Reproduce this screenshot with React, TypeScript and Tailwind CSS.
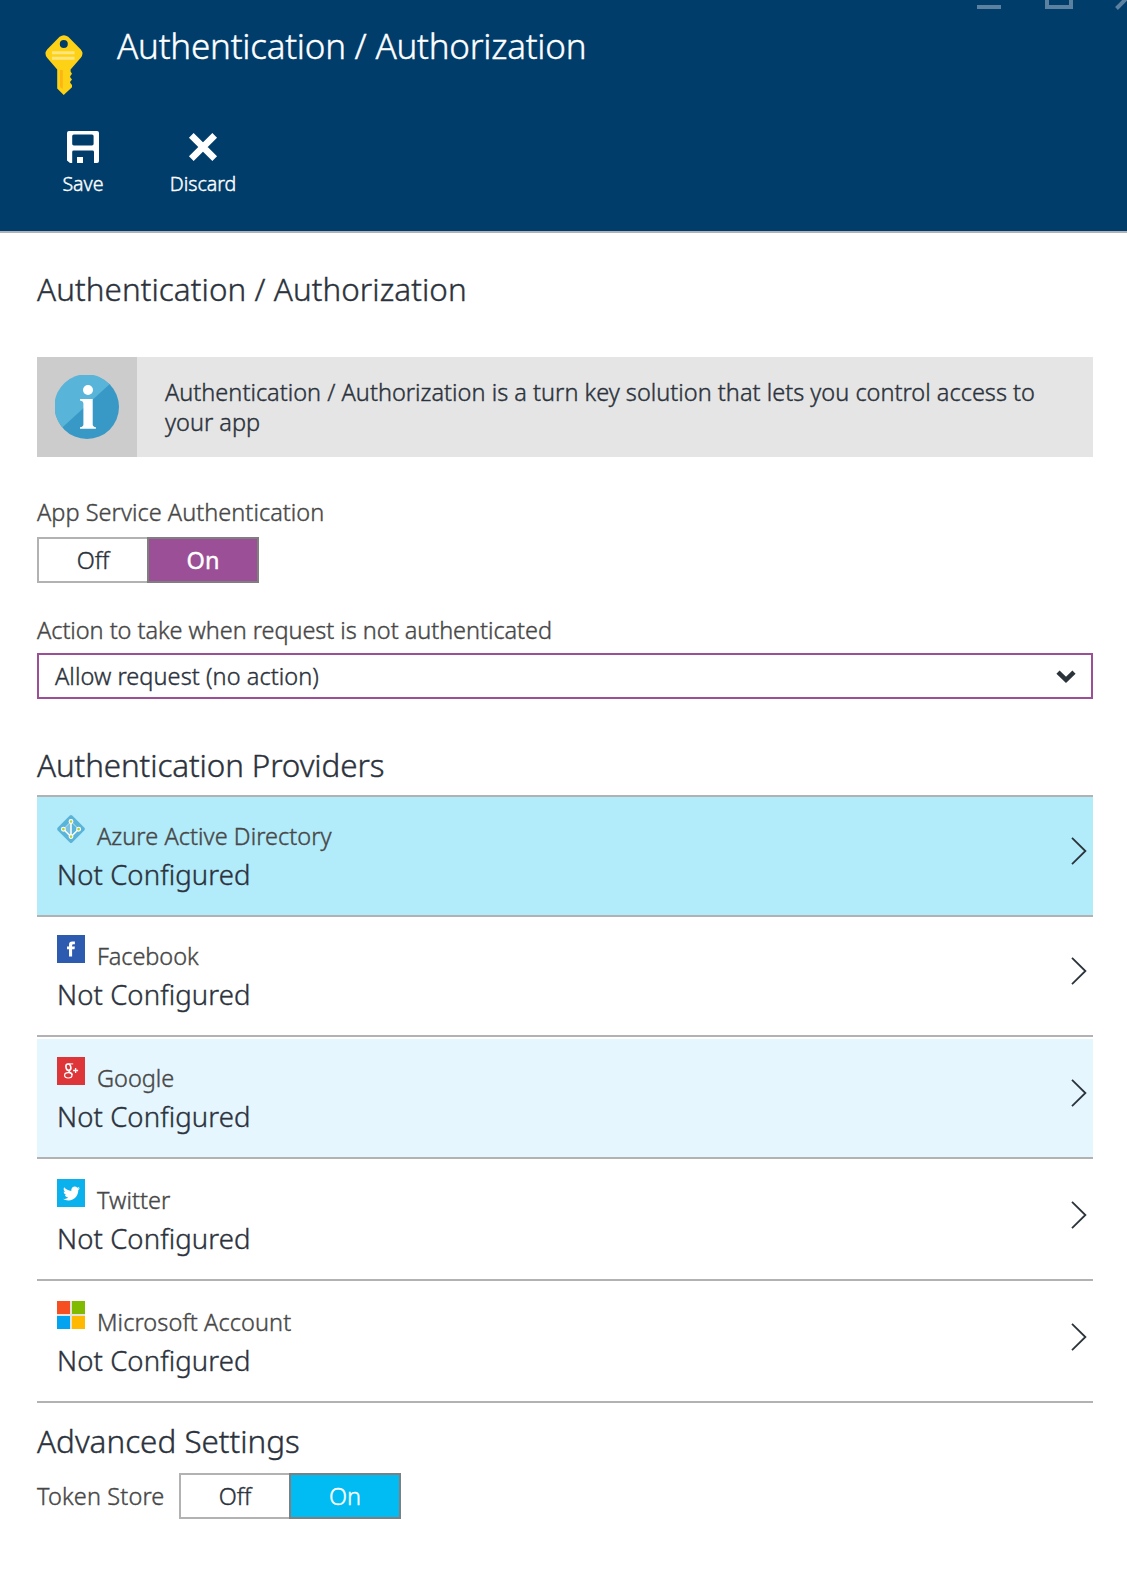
import React, { useState } from "react";
import { FaTwitter } from "react-icons/fa";

function KeyIcon() {
  return (
    <svg className="block h-[60px] w-[38px]" viewBox="0 0 38 60">
      <path
        fillRule="evenodd"
        fill="#FCD116"
        d="M14.6 1.8Q18.9 -1.4 23.2 1.8L35.8 14.4Q39.2 18.6 35.8 22.8L25.6 34.4V36.6L27 38.8L25.2 41.2V42.2L27 44.4L25.2 46.8V47.8L27 50V52.2L18.7 60L12.2 53.4V34.4L2.1 22.8Q-1.2 18.6 2.1 14.4ZM18.8 4.9A4 4 0 1 0 18.8 12.9A4 4 0 1 0 18.8 4.9Z"
      />
      <path fill="#FFE57C" d="M7 16.3H29.6V19.3H7ZM7 21.8H29.6V24.8H7Z" />
      <path fill="#FCB514" d="M15 35H17.8V54L15 52Z" />
    </svg>
  );
}

function SaveIcon() {
  return (
    <svg className="block size-8" viewBox="0 0 32 32">
      <path
        fill="#fff"
        fillRule="evenodd"
        d="M2 0H30Q32 0 32 2V30Q32 32 30 32H27V21Q27 19.6 25.4 19.6H6.6Q5.2 19.6 5.2 21V32H3L0 29.6V2Q0 0 2 0ZM6.8 3.4Q5.2 3.4 5.2 5V13Q5.2 14.4 6.8 14.4H25Q26.6 14.4 26.6 13V5Q26.6 3.4 25 3.4Z"
      />
      <path fill="#fff" d="M10 26H16V32H10Z" />
    </svg>
  );
}

function DiscardIcon() {
  return (
    <svg className="block size-8" viewBox="0 0 32 32">
      <path d="M4.3 4.3L27.7 27.7M27.7 4.3L4.3 27.7" stroke="#fff" strokeWidth="6.6" />
    </svg>
  );
}

function InfoIcon() {
  return (
    <svg className="block size-16" viewBox="0 0 64 64">
      <circle cx="32" cy="32" r="32" fill="#3999C6" />
      <path d="M7.3 52.4A32 32 0 0 1 54.5 9.2Z" fill="#59B4D9" />
      <circle cx="33" cy="15" r="5" fill="#fff" />
      <path
        fill="#fff"
        d="M25 24H37.7V49.5Q37.7 51.8 40.9 52.2V53.8H25V52.2Q28.4 51.8 28.4 49.5V28.6Q28.4 26.2 25 25.6Z"
      />
    </svg>
  );
}

function AzureIcon() {
  return (
    <svg className="block size-7" viewBox="0 0 28 28">
      <path d="M12.8 .6Q14 -.4 15.2 .6L27.4 12.8Q28.4 14 27.4 15.2L15.2 27.4Q14 28.4 12.8 27.4L.6 15.2Q-.4 14 .6 12.8Z" fill="#59B4D9" />
      <path d="M14 6.5L6.4 14.2L14 21.8Z" fill="#7CC3E0" />
      <path d="M14 6.5L6.4 14.2L14 21.8L21.6 14.2Z" fill="none" stroke="#BFE4F2" strokeWidth="1" />
      <path d="M14 6.5V21.8M6.4 14.2L14 21.8L21.6 14.2" fill="none" stroke="#fff" strokeWidth="1.5" />
      <g fill="#B8D432" stroke="#fff" strokeWidth="1.1">
        <circle cx="14" cy="6.5" r="1.9" />
        <circle cx="6.4" cy="14.2" r="1.9" />
        <circle cx="21.6" cy="14.2" r="1.9" />
        <circle cx="14" cy="21.6" r="1.9" />
      </g>
    </svg>
  );
}

function FacebookIcon() {
  return (
    <svg className="block size-7 bg-[#2D5BB0]" viewBox="0 0 28 28">
      <path
        fill="#fff"
        d="M12 21.6V14.2H10V11.5H12V9.9Q12 6.6 15.2 6.6H17.9V9.3H16.2Q15.1 9.3 15.1 10.4V11.5H17.9L17.5 14.2H15.1V21.6Z"
      />
    </svg>
  );
}

function GoogleIcon() {
  return (
    <svg className="block size-7 bg-[#DD3538]" viewBox="0 0 28 28">
      <g fill="none" stroke="#fff">
        <ellipse cx="11.4" cy="10.2" rx="2.4" ry="3.2" strokeWidth="1.6" transform="rotate(-14 11.4 10.2)" />
        <path d="M11.4 6.9H16.2" strokeWidth="1" />
        <path d="M13 13Q11 14.2 13 15.4Q15.2 16.6 15.1 18" strokeWidth="1.5" />
        <ellipse cx="11.3" cy="18.3" rx="3.7" ry="2.7" strokeWidth="1.2" />
        <path d="M18.6 11V16M16.1 13.5H21.1" strokeWidth="1.3" />
      </g>
    </svg>
  );
}

function TwitterIcon() {
  return (
    <div className="size-7 bg-[#0AB1EC] pt-1.5 pl-1.5">
      <FaTwitter className="block size-[17px] text-white" />
    </div>
  );
}

function MicrosoftIcon() {
  return (
    <div className="grid size-7 grid-cols-2 gap-[1.6px] bg-[#E4E4DC]">
      <div className="bg-[#F65022]" />
      <div className="bg-[#80BB01]" />
      <div className="bg-[#02A4F0]" />
      <div className="bg-[#FFB902]" />
    </div>
  );
}

const providers = [
  { name: "Azure Active Directory", Icon: AzureIcon, row: "bg-[#B2EBFA]", label: "tracking-[0.06px]" },
  { name: "Facebook", Icon: FacebookIcon, row: "bg-white", label: "tracking-[-0.07px]" },
  { name: "Google", Icon: GoogleIcon, row: "mt-0.5 bg-[#E5F6FE]", label: "tracking-normal" },
  { name: "Twitter", Icon: TwitterIcon, row: "mt-0.5 bg-white", label: "tracking-[0.05px]" },
  { name: "Microsoft Account", Icon: MicrosoftIcon, row: "mt-0.5 bg-white", label: "tracking-[0.1px]" },
];

function Toggle({ onClass }: { onClass: string }) {
  const [on, setOn] = useState(true);
  const base = "h-[46px] w-28 border-2 pb-px text-center text-[23.5px] leading-[42px]";
  const off = "border-[#B2B2B2] bg-white text-[#2B323C]";
  const active = "relative border-[#7F7F7F] text-white " + onClass;
  return (
    <div className="flex w-[222px]">
      <button className={base + " " + (on ? off : active)} onClick={() => setOn(false)}>Off</button>
      <button className={base + " -ml-0.5 " + (on ? active : off)} onClick={() => setOn(true)}>On</button>
    </div>
  );
}

export default function App() {
  return (
    <div className="h-[1585px] w-[1127px] overflow-hidden bg-white font-['Noto_Sans','Open_Sans',sans-serif] font-light text-[#2B323C] [-webkit-text-stroke:0.4px]">
      <header className="relative h-[233px] border-b-2 border-[#B0B3B6] bg-[#003D6B] text-white">
        <svg className="absolute top-0 right-0 h-3 w-[150px]" viewBox="0 0 150 12" fill="none" stroke="#5C81A0" strokeWidth="4">
          <path d="M0 7H24M70 -4V7H94V-4M139.5 8.5L152 -4" />
        </svg>
        <div className="flex">
          <div className="pt-[35px] pl-[45px]">
            <KeyIcon />
          </div>
          <h1 className="ml-[34px] pt-[22px] text-[35px] leading-[48px] tracking-[-0.24px]">Authentication / Authorization</h1>
        </div>
        <div className="mt-9 flex pl-[43px]">
          <button className="flex w-20 flex-col items-center text-[19.6px] leading-[30px]">
            <SaveIcon />
            <span className="mt-1.5">Save</span>
          </button>
          <button className="ml-10 flex w-20 flex-col items-center text-[19.6px] leading-[30px]">
            <DiscardIcon />
            <span className="mt-1.5">Discard</span>
          </button>
        </div>
      </header>

      <main className="pt-9 pr-[34px] pl-[37px]">
        <h2 className="text-[31.4px] leading-10 tracking-[0.08px]">Authentication / Authorization</h2>

        <div className="mt-12 flex h-[100px] bg-[#E5E5E5]">
          <div className="flex w-[100px] items-center justify-center bg-[#CCCCCC]">
            <InfoIcon />
          </div>
          <p className="pt-5 pl-7 text-[23.5px] leading-[30px] tracking-[0.02px]">
            Authentication / Authorization is a turn key solution that lets you control access to
            <br />
            your app
          </p>
        </div>

        <div className="mt-10 text-[23.5px] leading-[30px] tracking-[0.04px] text-[#474747]">App Service Authentication</div>
        <div className="mt-2.5">
          <Toggle onClass="bg-[#9B4F96] font-normal" />
        </div>

        <div className="mt-8 text-[23.5px] leading-[30px] tracking-[-0.04px] text-[#474747]">
          Action to take when request is not authenticated
        </div>
        <div className="mt-2 flex h-[46px] items-center justify-between border-2 border-[#9B4F96] pr-[15px] pl-4">
          <span className="text-[23.5px] leading-[42px] tracking-[0.07px]">Allow request (no action)</span>
          <svg className="mt-px block h-[13px] w-5" viewBox="0 0 20 13">
            <path d="M2 2.2L10 9.8L18 2.2" fill="none" stroke="#2B343B" strokeWidth="4.6" />
          </svg>
        </div>

        <h2 className="mt-[46px] text-[31.4px] leading-10 tracking-[-0.1px]">Authentication Providers</h2>
        <div className="mt-2.5 border-t-2 border-[#B2B2B2]">
          {providers.map(({ name, Icon, row, label }) => (
            <div key={name} className={"flex h-[120px] justify-between border-b-2 border-[#B2B2B2] pr-1.5 pl-5 " + row}>
              <div>
                <div className="flex">
                  <div className="pt-[18px]">
                    <Icon />
                  </div>
                  <span className={"ml-3 pt-6 text-[23.5px] leading-[30px] text-[#474747] " + label}>{name}</span>
                </div>
                <div className="mt-1.5 text-[27.5px] leading-9 tracking-[0.09px]">Not Configured</div>
              </div>
              <svg className="mt-10 block h-7 w-4" viewBox="0 0 16 28">
                <path d="M1 .8L14.4 14L1 27.2" fill="none" stroke="#2B343B" strokeWidth="1.8" />
              </svg>
            </div>
          ))}
        </div>

        <h2 className="mt-[18px] text-[31.4px] leading-10">Advanced Settings</h2>
        <div className="mt-3 flex items-center">
          <span className="w-[142px] text-[23.5px] leading-[46px] tracking-[0.15px] text-[#474747]">Token Store</span>
          <Toggle onClass="bg-[#00BCF2]" />
        </div>
      </main>
    </div>
  );
}
